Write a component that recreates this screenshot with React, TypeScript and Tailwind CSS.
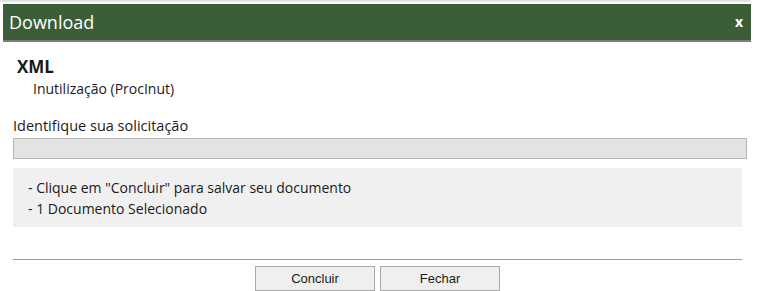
export default function App() {
  const font = { fontFamily: '"Open Sans", "Noto Sans", sans-serif' };

  return (
    <div className="h-[291px] w-[757px] overflow-hidden bg-white text-[#1a1a1a]" style={font}>
      <div className="h-[2px] w-[751px] bg-[#e4e4e4]" />
      <div className="ml-[3px] mt-[2px] flex h-[38px] w-[748px] items-center justify-between border-b-2 border-[#7c7c7c] bg-[#3b5e39] pl-[6px] pr-[8px]">
        <span className="text-[18px] leading-none text-white">Download</span>
        <span className="text-[14px] font-bold leading-none text-white">x</span>
      </div>

      <div className="px-[13px]">
        <div className="ml-[4px] mt-[14px] text-[17px] font-bold leading-[22px]">XML</div>
        <div className="ml-[20px] mt-[1px] text-[14px] leading-[20px]">Inutilização (ProcInut)</div>

        <div className="mt-[17px] text-[14.5px] leading-[20px]">Identifique sua solicitação</div>
        <div className="mt-[2px] h-[21px] w-[734px] border border-[#b5b5b5] bg-[#e3e3e3]" />

        <div className="mt-[9px] flex h-[59px] w-[729px] flex-col justify-center bg-[#f0f0f0] px-[15px] text-[14px] leading-[21px]">
          <div>- Clique em "Concluir" para salvar seu documento</div>
          <div>- 1 Documento Selecionado</div>
        </div>

        <div className="mt-[32px] h-[1px] w-[729px] bg-[#9a9a9a]" />

        <div
          className="mt-[6px] flex justify-center gap-[5px] pr-[2px] text-[13px]"
          style={{ fontFamily: '"Liberation Sans", Arial, sans-serif' }}
        >
          <button className="h-[25px] w-[120px] border border-[#a9a9a9] bg-[#efefef]">Concluir</button>
          <button className="h-[25px] w-[120px] border border-[#a9a9a9] bg-[#efefef]">Fechar</button>
        </div>
      </div>
    </div>
  );
}
